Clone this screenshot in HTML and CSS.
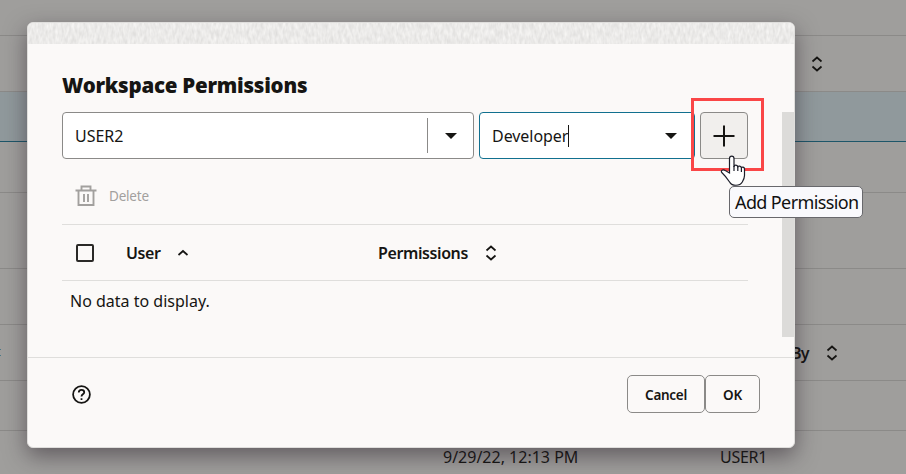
FILE: index.html
```html
<!DOCTYPE html>
<html lang="en">
<head>
<meta charset="utf-8">
<title>Workspace Permissions</title>
<link rel="stylesheet" href="styles.css">
</head>
<body>
<div class="page">
  <div class="row r1"></div>
  <div class="row r2"><svg class="sort bg-sort1" viewBox="0 0 12 16"><path d="M1.500 5.500 6 1.500l4.500 4M1.500 10.500 6 14.500l4.500-4"/></svg></div>
  <div class="row r3"></div>
  <div class="row r4"></div>
  <div class="row r5"></div>
  <div class="row r6"></div>
  <div class="row r7"><i class="link"></i><b class="by">By</b><svg class="sort" viewBox="0 0 12 16"><path d="M1.500 5.500 6 1.500l4.500 4M1.500 10.500 6 14.500l4.500-4"/></svg></div>
  <div class="row r8"></div>
  <div class="row r9"><span class="date">9/29/22, 12:13 PM</span><span class="who">USER1</span></div>
</div>
<div class="dialog">
  <svg class="texture" width="766" height="21">
    <filter id="paper" x="0" y="0" width="100%" height="100%" color-interpolation-filters="sRGB">
      <feTurbulence type="fractalNoise" baseFrequency="0.36 0.14" numOctaves="2" seed="7"/>
      <feColorMatrix values="0.13 0 0 0 0.857  0.13 0 0 0 0.853  0.13 0 0 0 0.847  0 0 0 0 1"/>
    </filter>
    <rect width="766" height="21" filter="url(#paper)"/>
  </svg>
  <h1><span>Workspace Permissions</span></h1>
  <div class="body">
    <div class="content">
      <div class="fields">
        <div class="field user"><span class="value">USER2</span><span class="arrow split"><i></i></span></div>
        <div class="field role"><span class="value dev">Developer</span><span class="caret"></span><span class="arrow"><i></i></span></div>
        <button class="add" aria-label="Add Permission"><svg width="22" height="22"><path d="M11 0.500v21M0.500 11h21"/></svg></button>
      </div>
      <div class="toolbar">
        <svg width="22" height="22" viewBox="0 0 22 22"><path d="M0.500 5.500h21M6.500 5V1.500h9V5M3.500 6v14h15V6M9 9v8M13 9v8"/></svg>
        <span>Delete</span>
      </div>
      <div class="thead">
        <i class="check"></i><b class="th-user">User</b>
        <svg class="up" viewBox="0 0 12 8"><path d="M1.500 6 6 2l4.500 4"/></svg>
        <b class="th-perm">Permissions</b>
        <svg class="sort" viewBox="0 0 12 16"><path d="M1.500 5.500 6 1.500l4.500 4M1.500 10.500 6 14.500l4.500-4"/></svg>
      </div>
      <div class="empty"><span>No data to display.</span></div>
    </div>
    <div class="scrollbar"></div>
  </div>
  <div class="footer">
    <svg class="help" viewBox="0 0 20 20"><circle cx="10" cy="10" r="8"/><path d="M7.400 8.200C7.400 6.500 8.500 5.600 10 5.600s2.600.9 2.600 2.300c0 1.900-2.600 1.900-2.600 3.900M10 13.600v1.600"/></svg>
    <button class="btn cancel"><span>Cancel</span></button><button class="btn ok"><span>OK</span></button>
  </div>
</div>
<div class="highlight"></div>
<svg class="pointer" width="27" height="34" viewBox="0 0 27 34"><path d="M9.500 19V4.500c0-3.300 4.500-3.300 4.500 0V13c0-2.600 3.800-2.400 3.800.4 .2-2 3.500-1.700 3.600.7 .4-1.700 3.100-1.300 3.100 1v6.500c0 2.500-1 4.500-2.200 6.400-2.500 4.500-10.300 4-12.300.6C7.500 25 5.500 22 2 18.800c-2-2.400 1-3.800 3.300-2.300Z"/><path class="knuckle" d="M14 12v5M17.800 13v4M21.400 14v4"/></svg>
<div class="tooltip"><span>Add Permission</span></div>
</body>
</html>
```
FILE: styles.css
```css
* { box-sizing: border-box; }
body {
  margin: 0;
  width: 906px;
  height: 474px;
  overflow: hidden;
  position: relative;
  background: #9f9e9c;
  color: #161513;
  font-family: "Noto Sans", "Open Sans", sans-serif;
  font-size: 16px;
}
svg { fill: none; stroke: currentColor; flex: none; }
span, b { white-space: nowrap; }
.page { height: 474px; overflow: hidden; }
.row { display: flex; align-items: center; border-bottom: 1px solid #8b8a88; }
.r1 { height: 36px; }
.r2 { height: 56px; }
.r3 { height: 50px; background: #90999c; border-color: #1d5669; }
.r4 { height: 51px; }
.r5 { height: 76px; }
.r6, .r7 { height: 56px; }
.r8 { height: 50px; }
.r9 { height: 51px; border: 0; }
.sort { width: 12px; height: 16px; stroke-width: 1.7; }
.bg-sort1 { margin-left: 811px; }
.link { width: 1px; height: 7px; border: solid #4b7a88; border-width: 1px 0; }
.by { margin-left: 790px; width: 35px; font-weight: 600; letter-spacing: -.8px; }
.date { margin-left: 443px; width: 277px; letter-spacing: 0; }
.who { letter-spacing: -.3px; }

.dialog {
  position: absolute;
  left: 27px;
  top: 22px;
  width: 768px;
  height: 426px;
  display: flex;
  flex-direction: column;
  overflow: hidden;
  background: #fbf9f8;
  border: 1px solid #dfdedc;
  border-radius: 6px;
  box-shadow: 0 8px 22px rgba(35, 25, 35, .5);
}
.texture { display: block; height: 21px; }
h1 { height: 68px; margin: 0; padding: 27px 0 0 34px; font-size: 20.500px; line-height: 29px; font-weight: 900; letter-spacing: -.24px; }
.body { display: flex; height: 246px; border-bottom: 1px solid #dfdedc; }
.content { width: 686px; margin-left: 34px; }
.scrollbar { width: 12px; height: 225px; margin-left: 34px; background: #dcdbd9; }
.fields { display: flex; height: 47px; }
.field { display: flex; align-items: center; background: #fff; border: 1px solid #8b8a88; border-radius: 4px; padding-left: 12px; }
.value { letter-spacing: -.05px; }
.user { width: 412px; margin-right: 5px; }
.role { width: 216px; margin-right: 5px; border-color: #11708f; }
.arrow { display: flex; align-items: center; justify-content: center; width: 46px; height: 35px; margin-left: auto; }
.arrow i { border: 6px solid transparent; border-top-color: #161513; border-bottom: 0; }
.split { border-left: 1px solid #8b8a88; }
.caret { width: 1px; height: 22px; background: #161513; }
.add { width: 48px; padding: 0; display: flex; align-items: center; justify-content: center; background: #f1efed; border: 1px solid #8b8a88; border-radius: 4px; color: #161513; }
.add svg { stroke-width: 2; }
.toolbar { display: flex; align-items: center; gap: 12px; height: 66px; padding: 9px 0 0 13px; color: #a2a09e; font-size: 13.500px; letter-spacing: -.2px; border-bottom: 1px solid #dfdedc; }
.toolbar svg { stroke-width: 1.9; }
.thead { display: flex; align-items: center; height: 56px; padding-left: 14px; border-bottom: 1px solid #dfdedc; }
.thead b { font-weight: 600; letter-spacing: -.4px; }
.check { width: 18px; height: 18px; border: 2px solid #2a2927; border-radius: 2px; margin-right: 32px; }
.th-user { width: 51px; }
.up { width: 12px; height: 8px; stroke-width: 1.7; margin-right: 189px; }
.th-perm { width: 107px; }
.empty { height: 40px; line-height: 40px; padding-left: 8px; }
.footer { display: flex; align-items: flex-start; flex: 1; padding: 17px 34px 0 43px; }
.help { width: 21px; height: 21px; margin-top: 9px; margin-right: auto; stroke-width: 1.7; }
.btn { height: 38px; padding: 2px 0 0; font: 600 13.500px "Noto Sans", sans-serif; letter-spacing: -.3px; color: #161513; background: transparent; border: 1px solid #8b8a88; border-radius: 5px; }
.cancel { width: 78px; }
.ok { width: 55px; }

.highlight { position: absolute; left: 691px; top: 98px; width: 73px; height: 73px; border: 3px solid #fa4647; }
.pointer { position: absolute; left: 720px; top: 154px; fill: #fff; stroke: #1c1d28; stroke-width: 1.2; }
.tooltip { position: absolute; left: 729px; top: 186px; width: 134px; height: 32px; padding-left: 5px; line-height: 31px; font-size: 18px; letter-spacing: -.62px; color: #111; background: #f9f9fc; border: 1px solid #68686c; border-radius: 5px; }
```
